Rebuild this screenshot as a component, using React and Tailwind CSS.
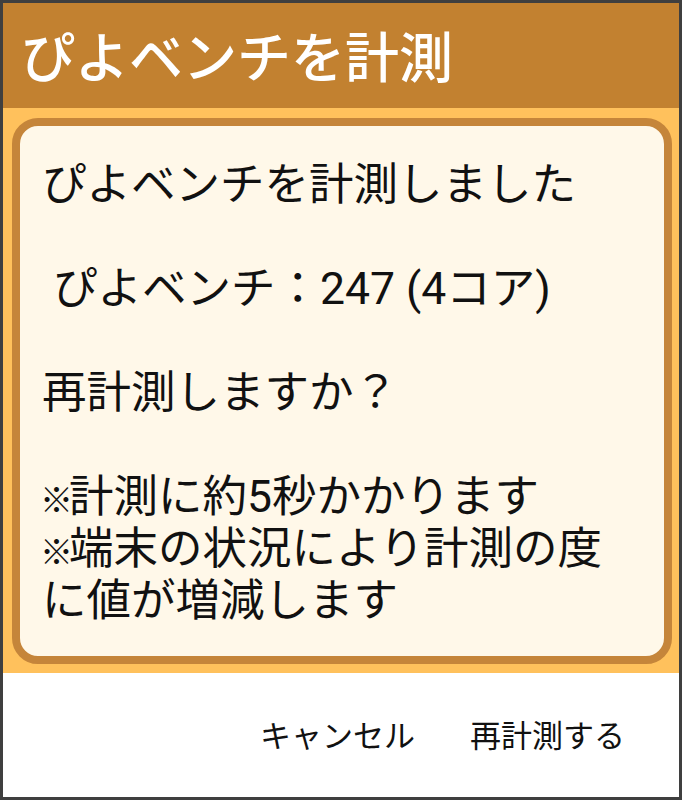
export default function App() {
  const font = { fontFamily: 'Roboto, "Noto Sans CJK JP", sans-serif' };
  const Mark = () => (
    <span className="inline-block w-[27px] text-[33px]">
      <span className="-ml-[2px] tracking-[-8px]">※</span>
    </span>
  );
  const lines = [
    "ぴよベンチを計測しました",
    "",
    " ぴよベンチ：247 (4コア)",
    "",
    "再計測しますか？",
    "",
    <>
      <Mark />
      計測に約5秒かかります
    </>,
    <>
      <Mark />
      端末の状況により計測の度
    </>,
    "に値が増減します",
  ];

  return (
    <div
      className="w-[682px] h-[800px] bg-[#3f3f3f] pt-[3px] pb-[3px] pl-[3px] pr-[3px]"
      style={font}
    >
      <div className="h-full flex flex-col">
        <div className="h-[105px] shrink-0 bg-[#c28130] flex items-center pl-[18px] pt-[8px]">
          <span className="text-white text-[54px] leading-none font-medium">
            ぴよベンチを計測
          </span>
        </div>

        <div className="bg-[#ffc15c] pl-[9px] pr-[7px] pt-[10px] pb-[9px]">
          <div className="rounded-[26px] border-[8px] border-[#c5853a] bg-[#fff8e9] pl-[22px] pr-[16px] pt-[33px] pb-[29px]">
            {lines.map((l, i) => (
              <div
                key={i}
                className="h-[52px] text-[44.5px] leading-[52px] text-[#111] whitespace-pre"
              >
                {l}
              </div>
            ))}
          </div>
        </div>

        <div className="flex-1 bg-white flex items-center justify-end pr-[54px] gap-[55px] pt-[3px]">
          <button type="button" className="text-[31px] leading-none text-[#111]">
            キャンセル
          </button>
          <button type="button" className="text-[31px] leading-none text-[#111]">
            再計測する
          </button>
        </div>
      </div>
    </div>
  );
}
